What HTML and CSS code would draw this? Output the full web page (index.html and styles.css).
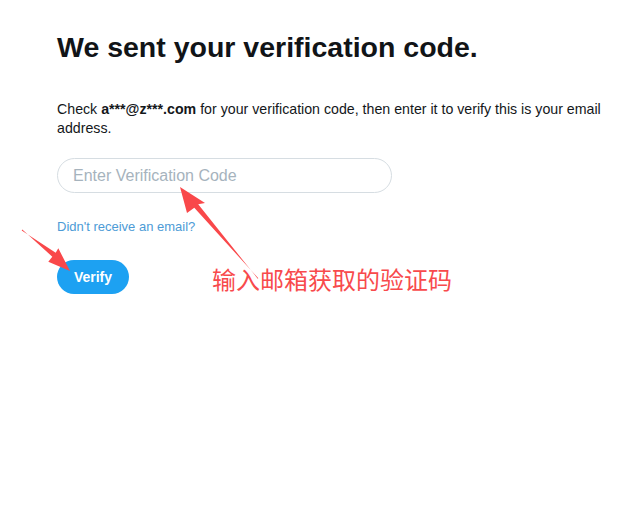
FILE: index.html
```html
<!DOCTYPE html>
<html lang="en">
<head>
<meta charset="utf-8">
<title>Verification code</title>
<link rel="stylesheet" href="styles.css">
</head>
<body>
<main class="page">
  <h1 class="title">We sent your verification code.</h1>
  <p class="desc">Check <strong>a***@z***.com</strong> for your verification code, then enter it to verify this is your email address.</p>
  <div class="field">
    <input class="code-input" type="text" placeholder="Enter Verification Code">
  </div>
  <a class="resend" href="#">Didn't receive an email?</a>
  <div class="actions">
    <button class="verify-btn" type="button">Verify</button>
    <span class="note">输入邮箱获取的验证码</span>
  </div>
</main>
<svg class="annotations" width="638" height="510" viewBox="0 0 638 510" aria-hidden="true">
  <polygon class="arrow" points="180,187 187,213 194.3,207.7 258.3,278.3 257.7,278.7 198.2,204.3 205,203"/>
  <polygon class="arrow" points="70,271 48.3,261.7 52.3,256.7 22.3,229.6 21.7,230.4 55.7,252.8 58.3,248.3"/>
</svg>
</body>
</html>
```

FILE: styles.css
```css
html, body {
  margin: 0;
  padding: 0;
  background: #ffffff;
}

body {
  font-family: "Liberation Sans", Arial, "Noto Sans CJK SC", sans-serif;
  color: #14171a;
  width: 638px;
  height: 510px;
  position: relative;
  overflow: hidden;
}

.page {
  padding: 31px 0 0 57px;
  width: 560px;
  display: flex;
  flex-direction: column;
  align-items: flex-start;
}

.title {
  margin: 0;
  font-size: 28.5px;
  line-height: 32px;
  font-weight: 700;
  color: #111417;
}

.desc {
  margin: 37px 0 0 0;
  font-size: 14.2px;
  line-height: 19px;
  color: #14171a;
}

.desc strong {
  font-weight: 700;
}

.field {
  margin-top: 20px;
}

.code-input {
  box-sizing: border-box;
  width: 335px;
  height: 35px;
  border: 1px solid #d6dde2;
  border-radius: 18px;
  padding: 0 15px;
  font-family: "Liberation Sans", Arial, sans-serif;
  font-size: 16px;
  color: #14171a;
  outline: none;
  background: #fff;
}

.code-input::placeholder {
  color: #a6b3bd;
}

.resend {
  margin-top: 26px;
  font-size: 13px;
  line-height: 16px;
  color: #4d9bd6;
  text-decoration: none;
}

.actions {
  margin-top: 25px;
  display: flex;
  align-items: center;
  gap: 83px;
}

.verify-btn {
  width: 72px;
  height: 34px;
  border: none;
  border-radius: 17px;
  background: #1da1f2;
  color: #ffffff;
  font-family: "Liberation Sans", Arial, sans-serif;
  font-size: 14px;
  font-weight: 700;
  padding: 0;
}

.note {
  font-family: "Noto Sans CJK SC", sans-serif;
  font-weight: 400;
  font-size: 24px;
  line-height: 28px;
  color: #f84a4c;
  margin-top: 4px;
}

.annotations {
  position: absolute;
  left: 0;
  top: 0;
  pointer-events: none;
}

.arrow {
  fill: #f9484a;
}
```
